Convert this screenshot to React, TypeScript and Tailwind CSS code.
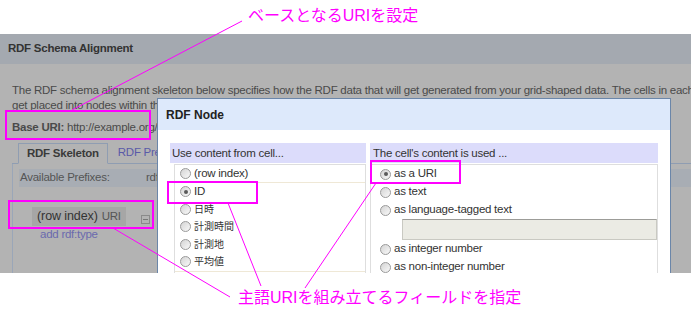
import React from 'react';

// Windows-style radio button
function Radio({ checked }: { checked?: boolean }) {
  return (
    <span className="relative inline-block h-[11px] w-[11px] shrink-0 rounded-full border border-[#9a9a9a] bg-gradient-to-br from-[#d4d4d4] to-[#f9f9f9]">
      {checked && (
        <span className="absolute left-[2.5px] top-[2.5px] h-[4px] w-[4px] rounded-full bg-[#5a5a5a]" />
      )}
    </span>
  );
}

const cellOptions = ['ID', '日時', '計測時間', '計測地', '平均値'];

function Annotations() {
  return (
    <>
      <svg className="pointer-events-none absolute left-0 top-0" width={691} height={317}>
        <g stroke="#ff00ff" fill="none">
          <line x1={242} y1={21} x2={72} y2={110} strokeWidth={1} />
          <line x1={113} y1={228} x2={230} y2={297} strokeWidth={1} />
          <line x1={228} y1={203} x2={261} y2={286} strokeWidth={1} />
          <line x1={376} y1={183} x2={305} y2={288} strokeWidth={1} />
          <rect x={6} y={111} width={144} height={28} strokeWidth={2} />
          <rect x={9} y={201} width={144} height={27} strokeWidth={2} />
          <rect x={168} y={182} width={89} height={21} strokeWidth={2} />
          <rect x={371} y={161} width={89} height={22} strokeWidth={2} />
        </g>
      </svg>
      <div className="absolute left-[248px] top-[6px] whitespace-nowrap text-[16px] leading-[20px] tracking-normal text-[#ff00ff]">
        ベースとなるURIを設定
      </div>
      <div className="absolute left-[238px] top-[288px] whitespace-nowrap text-[16px] leading-[20px] tracking-normal text-[#ff00ff]">
        主語URIを組み立てるフィールドを指定
      </div>
    </>
  );
}

function RdfNodeDialog() {
  return (
    <div className="absolute left-[157px] top-[64px] h-[300px] w-[514px] border border-[#6b86a9] bg-white">
      <div className="flex h-[31px] items-center bg-[#dde9fb] px-[8px] text-[12px] font-bold tracking-normal text-[#222]">RDF Node</div>
      <div className="flex gap-[4px] px-[12px] pt-[13px] text-[#333]">
        <div className="w-[196px]">
          <div className="h-[20px] bg-[#dcdcfb] px-[2px] leading-[20px]">Use content from cell...</div>
          <div className="ml-[4px] mt-[1px] border border-[#dedede]">
            <div className="flex h-[18px] items-center gap-[3px] border-b border-[#efe8d6] pl-[5px]">
              <Radio />
              <span>(row index)</span>
            </div>
            {cellOptions.map((c, i) => (
              <div key={c} className="flex h-[17.5px] items-center gap-[3px] pl-[5px]">
                <Radio checked={i === 0} />
                <span className={i === 0 ? '' : 'text-[10px] tracking-normal'}>{c}</span>
              </div>
            ))}
            <div className="h-[30px] border-t border-[#efe8d6]" />
          </div>
        </div>
        <div className="w-[288px]">
          <div className="h-[20px] bg-[#dcdcfb] px-[3px] leading-[20px]">The cell's content is used ...</div>
          <div className="mt-[1px] h-[200px] border border-[#dedede]">
            <div className="flex h-[18px] items-center gap-[3px] pl-[9px]">
              <Radio checked />
              <span>as a URI</span>
            </div>
            <div className="flex h-[18px] items-center gap-[3px] pl-[9px]">
              <Radio />
              <span>as text</span>
            </div>
            <div className="flex h-[18px] items-center gap-[3px] pl-[9px]">
              <Radio />
              <span>as language-tagged text</span>
            </div>
            <div className="ml-[31px] h-[21px] border border-[#c9c9c2] border-t-[#9c9c98] bg-[#ebebe4]" />
            <div className="flex h-[18px] items-center gap-[3px] pl-[9px]">
              <Radio />
              <span>as integer number</span>
            </div>
            <div className="flex h-[18px] items-center gap-[3px] pl-[9px]">
              <Radio />
              <span>as non-integer number</span>
            </div>
          </div>
        </div>
      </div>
    </div>
  );
}

export default function App() {
  return (
    <div className="relative h-[317px] w-[691px] overflow-hidden bg-white font-['Liberation_Sans','Noto_Sans_CJK_JP',sans-serif] text-[11.5px] tracking-[-0.25px]">
      <div className="h-[34px]" />
      <div className="relative h-[239px] overflow-hidden bg-[#b3b3b3]">
        <div className="flex h-[30px] items-center bg-[#a4a9b0] px-[8px] font-bold text-[#333]">RDF Schema Alignment</div>
        <div className="pt-[19px] text-[#4a4a4a]">
          <p className="whitespace-nowrap px-[12px] leading-[15px]">
            The RDF schema alignment skeleton below specifies how the RDF data that will get generated from your grid-shaped data. The cells in each record of your data will
          </p>
          <p className="whitespace-nowrap px-[12px] leading-[15px]">
            get placed into nodes within the skeleton. Configure each node by clicking on it.
          </p>
          <p className="mt-[7px] whitespace-nowrap px-[12px] leading-[15px]">
            <span className="font-bold">Base URI:</span> http://example.org/
          </p>
          <div className="ml-[12px] mt-[7px]">
            <div className="flex items-end border-b border-[#8f9db2] pl-[6px]">
              <div className="-mb-px flex h-[21px] items-center border border-[#8f9db2] border-b-[#b3b3b3] bg-[#b3b3b3] px-[8px] font-bold text-[#3a3a3a]">
                RDF Skeleton
              </div>
              <div className="flex h-[21px] items-center px-[10px] text-[#5a5aa8]">RDF Preview</div>
            </div>
            <div className="h-[120px] border-l border-[#9aa6b8] pl-[6px] pt-[5px]">
              <div className="flex h-[18px] items-center bg-[#a8adb4] text-[#555]">
                <span className="w-[127px] pl-[1px]">Available Prefixes:</span>
                <span>rdf rdfs owl xsd</span>
              </div>
              <div className="ml-[13px] mt-[20px] flex items-center">
                <div className="flex h-[19px] shrink-0 items-center gap-[4px] whitespace-nowrap bg-[#a6a6a6] px-[5px]">
                  <span className="text-[12.5px] tracking-[-0.1px] text-[#333]">(row index)</span>
                  <span className="text-[#555]">URI</span>
                </div>
                <div className="ml-[15px] mt-[5px] flex h-[9px] w-[9px] items-center justify-center border border-[#8a8a8a]">
                  <div className="h-px w-[5px] bg-[#777]" />
                </div>
              </div>
              <div className="ml-[21px] mt-[1px] leading-[15px] text-[#6a6aae]">add rdf:type</div>
            </div>
          </div>
        </div>
        <RdfNodeDialog />
      </div>
      <Annotations />
    </div>
  );
}
